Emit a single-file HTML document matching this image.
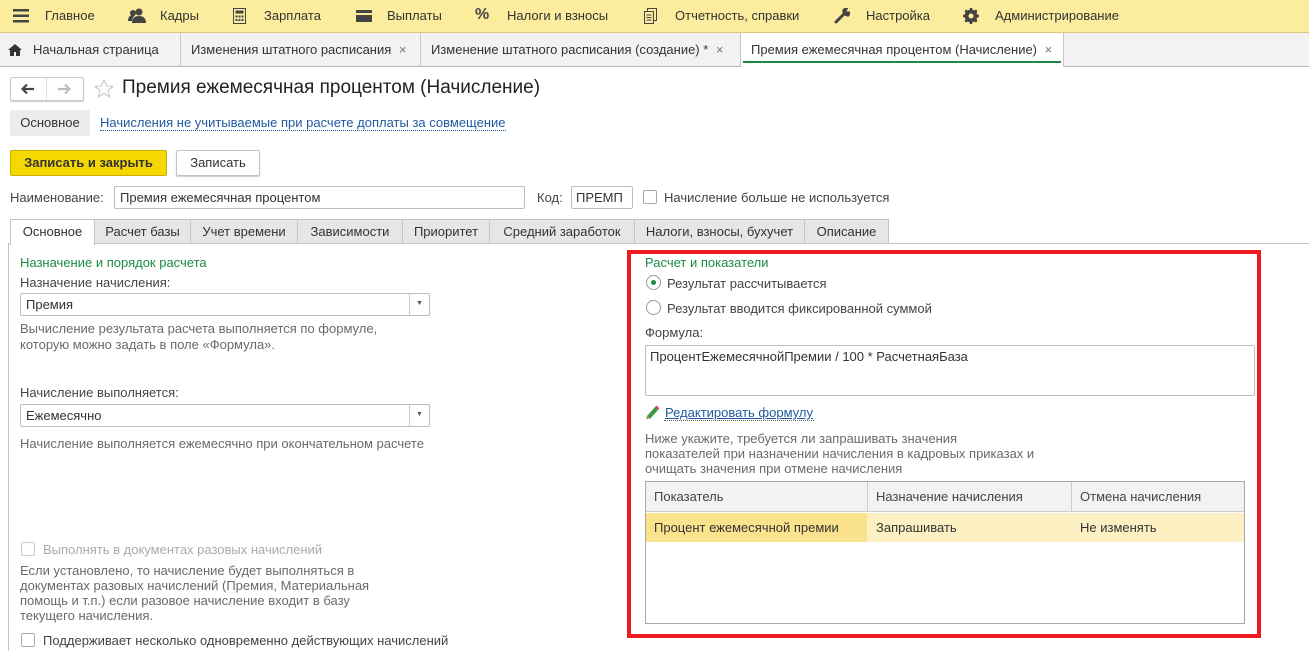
<!DOCTYPE html>
<html><head><meta charset="utf-8"><style>
*{box-sizing:border-box;margin:0;padding:0}
body{width:1309px;height:651px;overflow:hidden;background:#fff;font-family:"Liberation Sans",Arial,sans-serif;font-size:13px;color:#333;position:relative}
.a{position:absolute;white-space:nowrap}
.top{position:absolute;left:0;top:0;width:1309px;height:33px;background:#fbec9e;border-bottom:1px solid #d8c97c}
.tabs{position:absolute;left:0;top:33px;width:1309px;height:34px;background:#f2f2f2;border-bottom:1px solid #b8b8b8}
.tb{position:absolute;top:0;height:33px;border-right:1px solid #c8c8c8;line-height:33px;padding-left:10px;color:#333}
.inp{position:absolute;border:1px solid #bdbdbd;border-radius:2px;background:#fff;padding-left:5px;color:#333}
.ft{position:absolute;top:219px;height:25px;border:1px solid #c4c4c4;border-bottom:none;background:#e6e6e6;line-height:23px;text-align:center;color:#333}
.green{color:#1d8a45}
.gray{color:#6a6a6a}
.cb{position:absolute;width:14px;height:14px;border:1px solid #a9a9a9;border-radius:2px;background:#fff}
.rad{position:absolute;width:15px;height:15px;border:1px solid #999;border-radius:50%;background:#fff}
</style></head><body>
<div class="top"></div>
<svg class="a" style="left:13px;top:9px" width="16" height="14"><rect y="0" width="16" height="2.5" fill="#444"/><rect y="5.5" width="16" height="2.5" fill="#444"/><rect y="11" width="16" height="2.5" fill="#444"/></svg>
<div class="a" style="left:45px;top:8px">Главное</div>
<svg class="a" style="left:128px;top:8px" width="18" height="15"><circle cx="11" cy="4" r="3.5" fill="#444"/><path d="M4 15c0-5 3-7 7-7s7 2 7 7z" fill="#444"/><circle cx="5" cy="5" r="3" fill="#444"/><path d="M0 13c0-4 2-6 5-6 1 0 2 .5 2 .5-2 1.5-3 3.5-3 5.5z" fill="#444"/></svg>
<div class="a" style="left:160px;top:8px">Кадры</div>
<svg class="a" style="left:233px;top:8px" width="13" height="16"><rect x=".5" y=".5" width="12" height="15" fill="none" stroke="#444"/><rect x="2.5" y="2.5" width="8" height="3" fill="#444"/><g fill="#444"><rect x="2.5" y="7.5" width="2" height="2"/><rect x="5.5" y="7.5" width="2" height="2"/><rect x="8.5" y="7.5" width="2" height="2"/><rect x="2.5" y="11" width="2" height="2"/><rect x="5.5" y="11" width="2" height="2"/><rect x="8.5" y="11" width="2" height="2"/></g></svg>
<div class="a" style="left:264px;top:8px">Зарплата</div>
<svg class="a" style="left:356px;top:10px" width="16" height="12"><rect width="16" height="12" rx="1" fill="#444"/><rect y="3" width="16" height="2" fill="#fbec9e"/></svg>
<div class="a" style="left:387px;top:8px">Выплаты</div>
<div class="a" style="left:475px;top:6px;font-size:16px;font-weight:bold;color:#444">%</div>
<div class="a" style="left:507px;top:8px">Налоги и взносы</div>
<svg class="a" style="left:644px;top:8px" width="13" height="16"><rect x="3.5" y=".5" width="9" height="12" fill="none" stroke="#444"/><rect x=".5" y="3.5" width="9" height="12" fill="#fbec9e" stroke="#444"/><path d="M2.5 7h5M2.5 9.5h5M2.5 12h5" stroke="#444"/></svg>
<div class="a" style="left:675px;top:8px">Отчетность, справки</div>
<svg class="a" style="left:834px;top:8px" width="16" height="16"><path d="M2 14 9 7M10 2a4 4 0 0 0 4 5l1-2-3 0-1-2 1-2z" stroke="#444" stroke-width="3" fill="#444" stroke-linecap="round"/></svg>
<div class="a" style="left:866px;top:8px">Настройка</div>
<svg class="a" style="left:963px;top:8px" width="16" height="16"><circle cx="8" cy="8" r="5" fill="none" stroke="#444" stroke-width="3"/><g stroke="#444" stroke-width="2.5"><path d="M8 0v16M0 8h16M2.3 2.3l11.4 11.4M13.7 2.3 2.3 13.7"/></g><circle cx="8" cy="8" r="2.5" fill="#fbec9e"/></svg>
<div class="a" style="left:995px;top:8px">Администрирование</div>
<div class="tabs">
<div class="tb" style="left:0;width:181px;padding-left:33px">Начальная страница</div>
<svg class="a" style="left:8px;top:11px" width="14" height="12"><path d="M7 0 0 6h2v6h4V8h2v4h4V6h2z" fill="#333"/></svg>
<div class="tb" style="left:181px;width:240px">Изменения штатного расписания <span style="color:#777;margin-left:4px">×</span></div>
<div class="tb" style="left:421px;width:320px">Изменение штатного расписания (создание) * <span style="color:#777;margin-left:4px">×</span></div>
<div class="tb" style="left:741px;width:323px;background:#fff;height:34px">Премия ежемесячная процентом (Начисление) <span style="color:#777;margin-left:4px">×</span></div>
<div class="a" style="left:743px;top:28px;width:318px;height:2px;background:#1d8a45"></div>
</div>
<div class="a" style="left:10px;top:77px;width:74px;height:24px;border:1px solid #c8c8c8;border-radius:2px;box-shadow:0 1px 1px #ccc"></div>
<div class="a" style="left:46px;top:78px;width:1px;height:22px;background:#ddd"></div>
<svg class="a" style="left:21px;top:83px" width="14" height="12"><path d="M13 6H2M6 1.5 1.5 6 6 10.5" stroke="#444" stroke-width="2.2" fill="none"/></svg>
<svg class="a" style="left:57px;top:83px" width="14" height="12"><path d="M1 6h11M8 1.5 12.5 6 8 10.5" stroke="#bbb" stroke-width="2.2" fill="none"/></svg>
<svg class="a" style="left:94px;top:79px" width="20" height="19"><path d="M10 1l2.6 5.8 6.3.6-4.8 4.2 1.4 6.2L10 14.6 4.5 17.8l1.4-6.2L1.1 7.4l6.3-.6z" fill="none" stroke="#ccc" stroke-width="1.2"/></svg>
<div class="a" style="left:122px;top:77px;font-size:19px;color:#222">Премия ежемесячная процентом (Начисление)</div>
<div class="a" style="left:10px;top:110px;width:80px;height:26px;background:#ececec;border-radius:2px;line-height:26px;text-align:center;color:#333">Основное</div>
<div class="a" style="left:100px;top:116px;color:#1f5a9e;border-bottom:1px dotted #1f5a9e;line-height:14px">Начисления не учитываемые при расчете доплаты за совмещение</div>
<div class="a" style="left:10px;top:150px;width:157px;height:26px;background:#f5d800;border:1px solid #c9b000;border-radius:2px;line-height:24px;text-align:center;font-weight:bold;color:#333">Записать и закрыть</div>
<div class="a" style="left:176px;top:150px;width:84px;height:26px;background:#fff;border:1px solid #c4c4c4;border-radius:2px;line-height:24px;text-align:center;box-shadow:0 1px 1px #ccc">Записать</div>
<div class="a" style="left:10px;top:190px;color:#444">Наименование:</div>
<div class="inp" style="left:114px;top:186px;width:411px;height:23px;line-height:21px">Премия ежемесячная процентом</div>
<div class="a" style="left:537px;top:190px;color:#444">Код:</div>
<div class="inp" style="left:571px;top:186px;width:62px;height:23px;line-height:21px;padding-left:4px">ПРЕМП</div>
<div class="cb" style="left:643px;top:190px"></div>
<div class="a" style="left:664px;top:190px;color:#444">Начисление больше не используется</div>
<div class="ft" style="left:10px;width:85px;background:#fff;height:26px;z-index:2">Основное</div>
<div class="ft" style="left:94px;width:97px">Расчет базы</div>
<div class="ft" style="left:190px;width:108px">Учет времени</div>
<div class="ft" style="left:297px;width:106px">Зависимости</div>
<div class="ft" style="left:402px;width:88px">Приоритет</div>
<div class="ft" style="left:489px;width:146px">Средний заработок</div>
<div class="ft" style="left:634px;width:171px">Налоги, взносы, бухучет</div>
<div class="ft" style="left:804px;width:85px">Описание</div>
<div class="a" style="left:8px;top:243px;width:1301px;height:1px;background:#c4c4c4"></div>
<div class="a" style="left:8px;top:243px;width:1px;height:408px;background:#c4c4c4"></div>
<div class="a green" style="left:20px;top:255px">Назначение и порядок расчета</div>
<div class="a" style="left:20px;top:275px;color:#444">Назначение начисления:</div>
<div class="inp" style="left:20px;top:293px;width:410px;height:23px;line-height:21px">Премия</div>
<div class="a" style="left:409px;top:294px;width:1px;height:21px;background:#ccc"></div>
<div class="a" style="left:416px;top:300px;font-size:7px;color:#555">▼</div>
<div class="a gray" style="left:20px;top:321px;line-height:16px">Вычисление результата расчета выполняется по формуле,<br>которую можно задать в поле «Формула».</div>
<div class="a" style="left:20px;top:385px;color:#444">Начисление выполняется:</div>
<div class="inp" style="left:20px;top:404px;width:410px;height:23px;line-height:21px">Ежемесячно</div>
<div class="a" style="left:409px;top:405px;width:1px;height:21px;background:#ccc"></div>
<div class="a" style="left:416px;top:411px;font-size:7px;color:#555">▼</div>
<div class="a gray" style="left:20px;top:436px">Начисление выполняется ежемесячно при окончательном расчете</div>
<div class="cb" style="left:21px;top:542px;border-color:#ccc"></div>
<div class="a" style="left:43px;top:542px;color:#aaa">Выполнять в документах разовых начислений</div>
<div class="a gray" style="left:20px;top:563px;line-height:15px">Если установлено, то начисление будет выполняться в<br>документах разовых начислений (Премия, Материальная<br>помощь и т.п.) если разовое начисление входит в базу<br>текущего начисления.</div>
<div class="cb" style="left:21px;top:633px"></div>
<div class="a" style="left:43px;top:633px;color:#444">Поддерживает несколько одновременно действующих начислений</div>
<div class="a" style="left:627px;top:250px;width:634px;height:388px;border:4px solid #ee1c25"></div>
<div class="a green" style="left:645px;top:255px">Расчет и показатели</div>
<div class="rad" style="left:646px;top:275px"></div>
<div class="a" style="left:651px;top:280px;width:5px;height:5px;border-radius:50%;background:#1d8a45"></div>
<div class="a" style="left:667px;top:276px;color:#444">Результат рассчитывается</div>
<div class="rad" style="left:646px;top:300px"></div>
<div class="a" style="left:667px;top:301px;color:#444">Результат вводится фиксированной суммой</div>
<div class="a" style="left:645px;top:325px;color:#444">Формула:</div>
<div class="inp" style="left:645px;top:345px;width:610px;height:51px;padding:3px 4px;color:#333">ПроцентЕжемесячнойПремии / 100 * РасчетнаяБаза</div>
<svg class="a" style="left:645px;top:405px" width="14" height="15"><path d="M2 11 10 2l3 3-8 9z" fill="#3c9a3c"/><path d="M2 11l-1 3 3-0.5z" fill="#a57a3c"/><path d="M10 2l1.5-1.5 3 3L13 5z" fill="#c44"/></svg>
<div class="a" style="left:664px;top:405px;color:#1f5a9e;border-bottom:1px dotted #666;padding:0 1px;line-height:15px;text-decoration:underline">Редактировать формулу</div>
<div class="a gray" style="left:645px;top:431px;line-height:15px">Ниже укажите, требуется ли запрашивать значения<br>показателей при назначении начисления в кадровых приказах и<br>очищать значения при отмене начисления</div>
<div class="a" style="left:645px;top:481px;width:600px;height:143px;border:1px solid #a9a9a9;background:#fff"></div>
<div class="a" style="left:646px;top:482px;width:598px;height:30px;background:#f2f2f2;border-bottom:1px solid #ccc"></div>
<div class="a" style="left:867px;top:482px;width:1px;height:30px;background:#ccc"></div>
<div class="a" style="left:1071px;top:482px;width:1px;height:30px;background:#ccc"></div>
<div class="a" style="left:654px;top:489px;color:#444">Показатель</div>
<div class="a" style="left:876px;top:489px;color:#444">Назначение начисления</div>
<div class="a" style="left:1080px;top:489px;color:#444">Отмена начисления</div>
<div class="a" style="left:646px;top:513px;width:598px;height:29px;background:#fdf1c4"></div>
<div class="a" style="left:646px;top:513px;width:221px;height:29px;background:#fbe38e"></div>
<div class="a" style="left:654px;top:520px;color:#333">Процент ежемесячной премии</div>
<div class="a" style="left:876px;top:520px;color:#333">Запрашивать</div>
<div class="a" style="left:1080px;top:520px;color:#333">Не изменять</div>
</body></html>
